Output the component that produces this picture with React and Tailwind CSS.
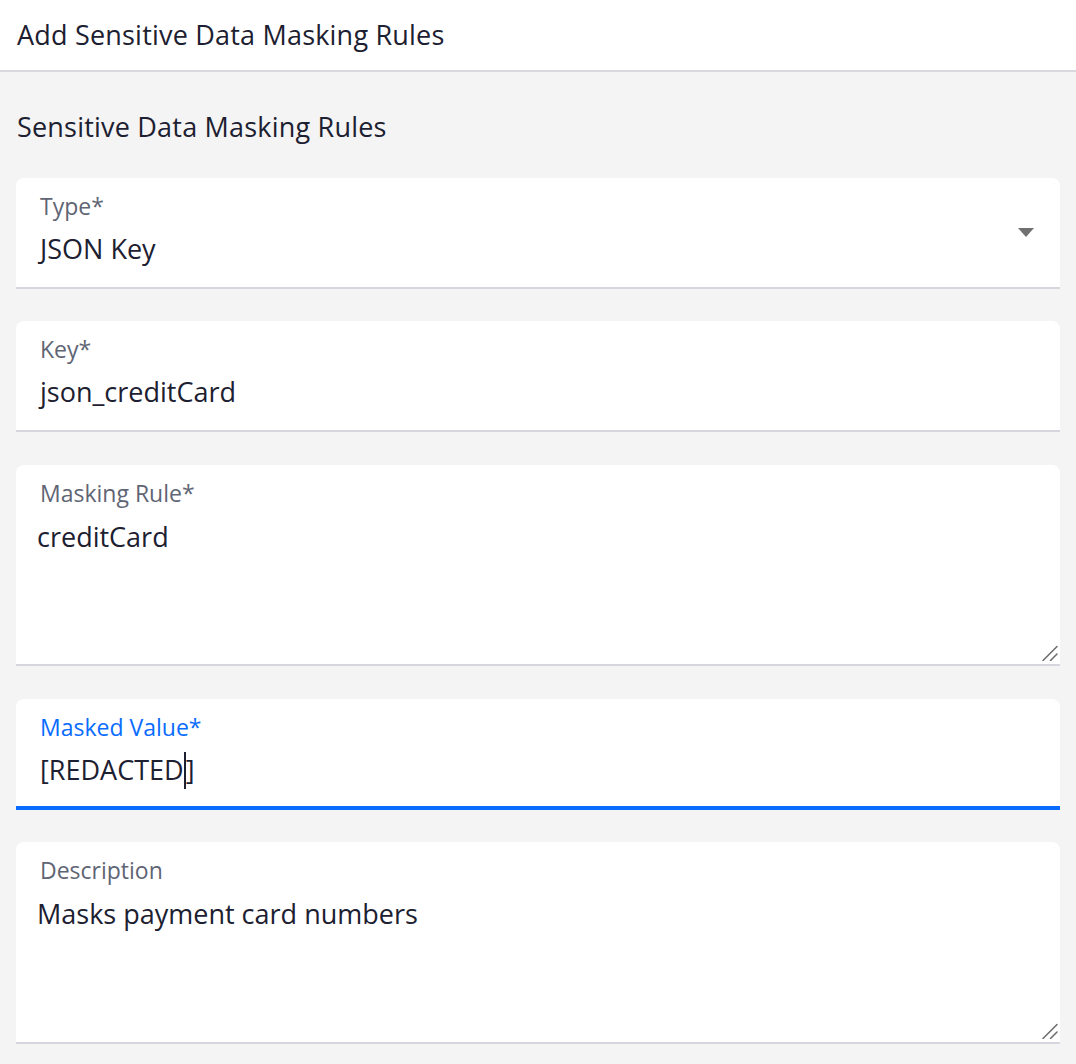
import React from "react";

const font = { fontFamily: "'Open Sans', 'Noto Sans', sans-serif" };

const FieldCard = ({ label, children, focused, tall, className = "" }) => {
  return (
    <div
      className={`relative flex flex-col bg-white rounded-t-[8px] ${
        focused ? "border-b-4 border-[#0a6cff]" : "border-b-2 border-[#d6d6de]"
      } ${tall ? "h-[201px]" : "h-[111px]"} ${className}`}
    >
      <div
        className={`pl-[24px] pt-[16px] text-[23px] leading-[24px] ${
          focused ? "text-[#0a6cff]" : "text-[#5f6574]"
        }`}
      >
        {label}
      </div>
      {children}
    </div>
  );
};

const SelectField = ({ label, value, className }) => (
  <FieldCard label={label} className={className}>
    <div className="relative pl-[24px] mt-[14px]">
      <span className="text-[27px] leading-[34px] text-[#1c2030]">{value}</span>
      <svg width="16" height="9" viewBox="0 0 16 9" className="absolute right-[26px] -top-[4px]">
        <path d="M0 0h16L8 9z" fill="#707070" />
      </svg>
    </div>
  </FieldCard>
);

const TextField = ({ label, value, focused, caretAt, className }) => (
  <FieldCard label={label} focused={focused} className={className}>
    <div className="pl-[24px] mt-[14px] text-[27px] leading-[34px] text-[#1c2030]">
      {caretAt != null ? (
        <>
          {value.slice(0, caretAt)}
          <span className="inline-block w-[2px] h-[37px] bg-[#1c2030] align-middle -mt-[4px]" />
          {value.slice(caretAt)}
        </>
      ) : (
        value
      )}
    </div>
  </FieldCard>
);

// resize grip in the textarea corner
const Grip = () => (
  <svg
    width="16"
    height="16"
    viewBox="0 0 16 16"
    className="absolute right-[2px] bottom-[3px] pointer-events-none"
  >
    <path d="M1 15.5L15 1.5M8.5 15.5L15 9" stroke="#6b6b6b" strokeWidth="1.5" strokeLinecap="round" />
  </svg>
);

const AreaField = ({ label, value, className, tallBy }) => (
  <FieldCard label={label} tall className={`${className} ${tallBy ? "h-[202px]" : ""}`}>
    <textarea
      readOnly
      defaultValue={value}
      style={font}
      className="flex-1 w-full resize-none bg-transparent outline-none pl-[21px] pt-[15px] text-[27px] leading-[34px] text-[#1c2030]"
    />
    <Grip />
  </FieldCard>
);

export default function App() {
  return (
    <div style={font} className="w-[1076px] h-[1064px] bg-[#f4f4f4] overflow-hidden">
      <div className="h-[72px] bg-white border-b-2 border-[#d8d8de] flex items-center px-[17px]">
        <h1 className="text-[27px] tracking-[0.2px] text-[#1c2030]">Add Sensitive Data Masking Rules</h1>
      </div>
      <div className="px-[16px]">
        <h2 className="pl-[1px] pt-[38px] pb-[34px] text-[27px] tracking-[0.2px] leading-[34px] text-[#1c2030]">
          Sensitive Data Masking Rules
        </h2>
        <div className="flex flex-col">
          <SelectField label="Type*" value="JSON Key" />
          <TextField label="Key*" value="json_creditCard" className="mt-[32px]" />
          <AreaField label="Masking Rule*" value="creditCard" className="mt-[33px]" />
          <TextField
            label="Masked Value*"
            value="[REDACTED]"
            focused
            caretAt={9}
            className="mt-[33px]"
          />
          <AreaField label="Description" value="Masks payment card numbers" className="mt-[32px]" tallBy />
        </div>
      </div>
    </div>
  );
}
